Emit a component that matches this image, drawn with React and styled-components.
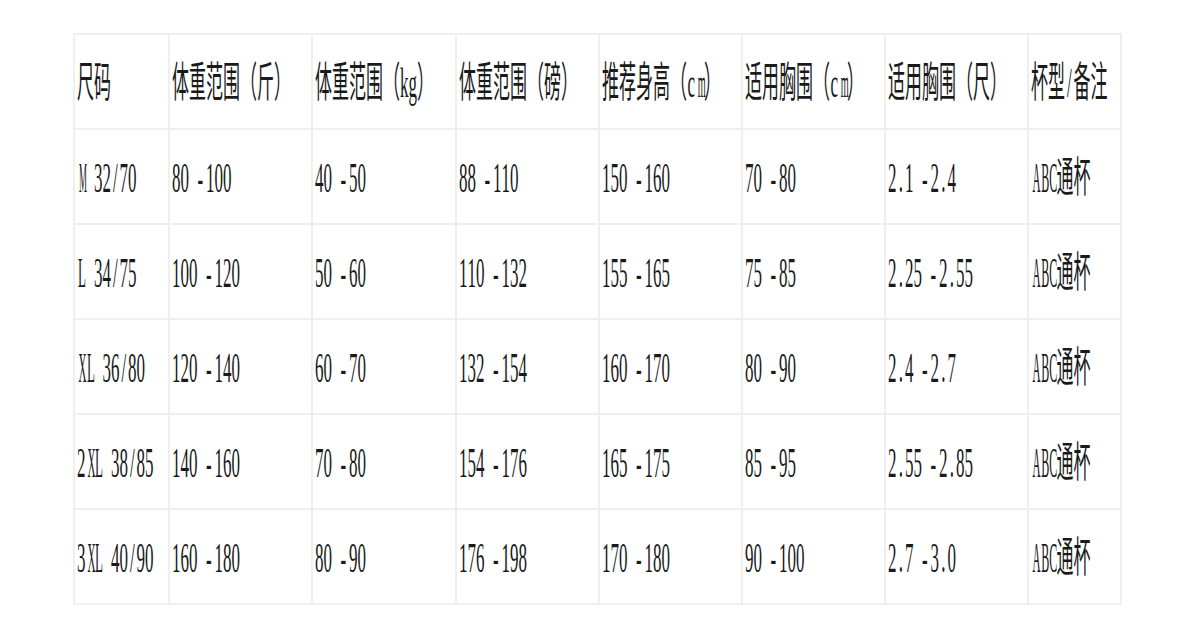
import React from "react";
import styled, { createGlobalStyle } from "styled-components";

const Global = createGlobalStyle`
  html, body { margin: 0; padding: 0; background: #fff; }
  body { font-family: "Liberation Serif", "Noto Sans CJK SC", serif; color: #1a1a1a; }
`;

const Page = styled.div`
  padding: 33px 0 0 73px;
`;

const Table = styled.table`
  border-collapse: collapse;
  table-layout: fixed;
  width: 1047px;
`;

const Col = styled.col`
  width: ${(p) => p.$w}px;
`;

const Row = styled.tr`
  height: 95px;
`;

const Cell = styled.td`
  border: 2px solid #efefef;
  padding: 4px 0 0 2px;
  vertical-align: middle;
  white-space: nowrap;
  overflow: visible;
`;

const Text = styled.span`
  display: inline-flex;
  font-size: 17px;
  line-height: 17px;
  transform: scaleY(2.45);
  transform-origin: left center;
`;

const Glyph = styled.span`
  display: inline-block;
  width: ${(p) => p.$w}em;
  text-align: ${(p) => p.$align};
  white-space: pre;
  overflow: visible;
  transform: scaleX(${(p) => p.$sx});
  transform-origin: ${(p) => (p.$align === "left" ? "left" : "center")} center;
`;

// advance widths (em) of Liberation Serif for letters wider than a half cell
const wideLetters = {
  M: 0.889, A: 0.722, B: 0.667, C: 0.667, X: 0.722, L: 0.611, m: 0.778,
};

const isHalf = (ch) => ch.charCodeAt(0) < 0x2000;

function Mono({ text }) {
  const chars = Array.from(text);
  return (
    <Text>
      {chars.map((ch, i) => {
        const half = isHalf(ch);
        let w = half ? 0.5 : 1;
        // the space after a range dash collapses into the dash cell
        if (ch === " " && chars[i - 1] === "-") w = 0;
        const lw = wideLetters[ch];
        const sx = lw ? (0.47 / lw).toFixed(3) : 1;
        const align = ch === "-" ? "left" : "center";
        return (
          <Glyph key={i} $w={w} $sx={sx} $align={align}>
            {w === 0 ? "" : ch}
          </Glyph>
        );
      })}
    </Text>
  );
}

const widths = [95, 143, 144, 143, 143, 143, 143, 93];

const header = [
  "尺码",
  "体重范围（斤）",
  "体重范围（kg）",
  "体重范围（磅）",
  "推荐身高（cm）",
  "适用胸围（cm）",
  "适用胸围（尺）",
  "杯型/备注",
];

const rows = [
  ["M 32/70", "80 - 100", "40 - 50", "88 - 110", "150 - 160", "70 - 80", "2.1 - 2.4", "ABC通杯"],
  ["L 34/75", "100 - 120", "50 - 60", "110 - 132", "155 - 165", "75 - 85", "2.25 - 2.55", "ABC通杯"],
  ["XL 36/80", "120 - 140", "60 - 70", "132 - 154", "160 - 170", "80 - 90", "2.4 - 2.7", "ABC通杯"],
  ["2XL 38/85", "140 - 160", "70 - 80", "154 - 176", "165 - 175", "85 - 95", "2.55 - 2.85", "ABC通杯"],
  ["3XL 40/90", "160 - 180", "80 - 90", "176 - 198", "170 - 180", "90 - 100", "2.7 - 3.0", "ABC通杯"],
];

export default function App() {
  return (
    <>
      <Global />
      <Page>
        <Table>
          <colgroup>
            {widths.map((w, i) => (
              <Col key={i} $w={w} />
            ))}
          </colgroup>
          <tbody>
            <Row>
              {header.map((h, i) => (
                <Cell key={i}>
                  <Mono text={h} />
                </Cell>
              ))}
            </Row>
            {rows.map((r, ri) => (
              <Row key={ri}>
                {r.map((c, ci) => (
                  <Cell key={ci}>
                    <Mono text={c} />
                  </Cell>
                ))}
              </Row>
            ))}
          </tbody>
        </Table>
      </Page>
    </>
  );
}
